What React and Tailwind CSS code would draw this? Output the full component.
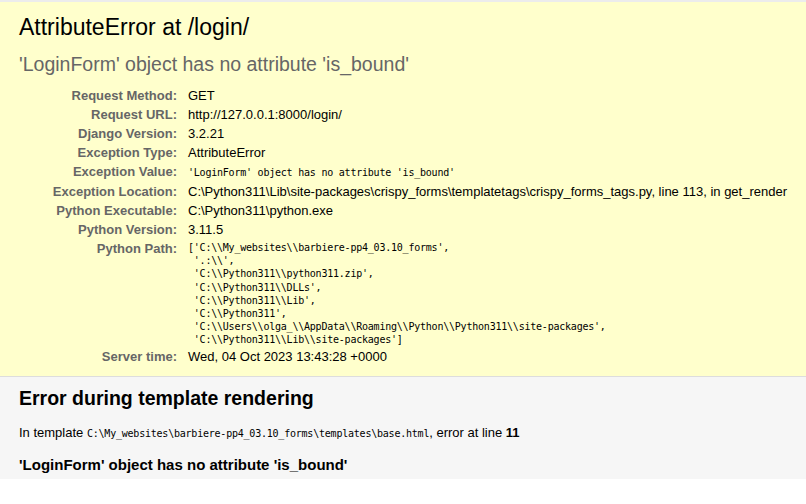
import React from 'react';

const mono = { fontFamily: '"DejaVu Sans Mono", "Liberation Mono", monospace' };

const meta = [
  ['Request Method:', 'GET'],
  ['Request URL:', 'http://127.0.0.1:8000/login/'],
  ['Django Version:', '3.2.21'],
  ['Exception Type:', 'AttributeError'],
  ['Exception Value:', "'LoginForm' object has no attribute 'is_bound'", true],
  ['Exception Location:', 'C:\\Python311\\Lib\\site-packages\\crispy_forms\\templatetags\\crispy_forms_tags.py, line 113, in get_render'],
  ['Python Executable:', 'C:\\Python311\\python.exe'],
  ['Python Version:', '3.11.5'],
];

const pythonPath = [
  "['C:\\\\My_websites\\\\barbiere-pp4_03.10_forms',",
  " '.:\\\\',",
  " 'C:\\\\Python311\\\\python311.zip',",
  " 'C:\\\\Python311\\\\DLLs',",
  " 'C:\\\\Python311\\\\Lib',",
  " 'C:\\\\Python311',",
  " 'C:\\\\Users\\\\olga_\\\\AppData\\\\Roaming\\\\Python\\\\Python311\\\\site-packages',",
  " 'C:\\\\Python311\\\\Lib\\\\site-packages']",
];

function MetaRow({ label, children }) {
  return (
    <>
      <div className="text-right font-bold text-[#666] whitespace-nowrap">{label}</div>
      <div className="whitespace-nowrap">{children}</div>
    </>
  );
}

export default function App() {
  return (
    <div
      className="min-h-screen bg-white text-black text-[13px]"
      style={{ fontFamily: '"Liberation Sans", Arial, sans-serif' }}
    >
      <div className="h-[2px] bg-[#ececec]" />

      {/* summary */}
      <div className="bg-[#ffffcc] border-b border-[#dddddd] px-[19px] pt-[10px] pb-[10px]">
        <h1 className="text-[23px] leading-[30px] font-normal">AttributeError at /login/</h1>
        <h2 className="mt-[10px] text-[19.5px] leading-[24px] font-normal text-[#666]">
          'LoginForm' object has no attribute 'is_bound'
        </h2>

        <div className="mt-[10px] grid grid-cols-[158px_1fr] gap-x-[11px] leading-[19px]">
          {meta.map(([label, value, isMono]) => (
            <MetaRow key={label} label={label}>
              {isMono ? (
                <span className="text-[10px] tracking-[-0.22px]" style={mono}>{value}</span>
              ) : (
                value
              )}
            </MetaRow>
          ))}
          <MetaRow label="Python Path:">
            <pre className="pt-[2px] text-[10px] leading-[13.2px] tracking-[-0.22px]" style={mono}>
              {pythonPath.join('\n')}
            </pre>
          </MetaRow>
          <MetaRow label="Server time:">Wed, 04 Oct 2023 13:43:28 +0000</MetaRow>
        </div>
      </div>

      {/* template */}
      <div className="bg-[#f6f6f6] px-[19px] pt-[10px] pb-[5px]">
        <h2 className="text-[19.5px] leading-[22px] font-bold">Error during template rendering</h2>
        <p className="mt-[16px] leading-[16px]">
          In template{' '}
          <code className="text-[10px] tracking-[-0.22px]" style={mono}>
            C:\My_websites\barbiere-pp4_03.10_forms\templates\base.html
          </code>
          , error at line <strong>11</strong>
        </p>
        <h3 className="mt-[14px] text-[15px] leading-[18px] font-bold">
          'LoginForm' object has no attribute 'is_bound'
        </h3>
      </div>
    </div>
  );
}
